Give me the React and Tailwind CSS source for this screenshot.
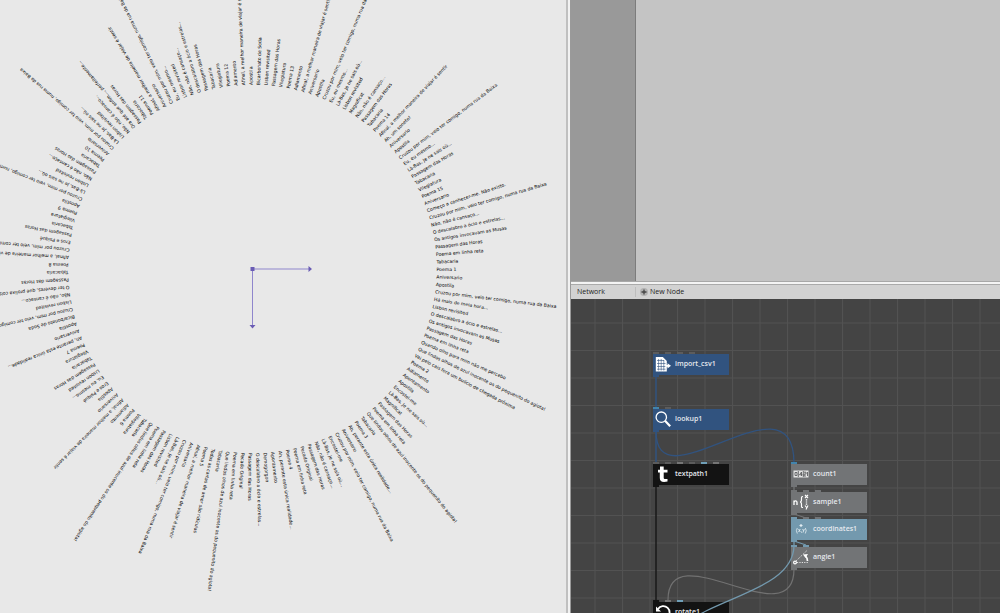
const SODA = "Bicarbonato de Soda";
const CRUZOU = "Cruzou por mim, veio ter comigo, numa rua da Baixa";
const LISBON = "Lisbon revisited";
const DESCALABRO = "O descalabro a ócio e estrelas...";
const MUSAS = "Os antigos invocavam as Musas";
const HORAS = "Passagem das Horas";
const RETA = "Poema em linha reta";
const OLHOS = "Que lindos olhos de azul inocente os do pequenito do agiota!";
const LABAS = "Là-Bas, Je ne sais où...";
const REALIDADE = "Ah, perante esta única realidade...";
const CANSACO = "Não, não é cansaço...";
const AFINAL = "Afinal, a melhor maneira de viajar é sentir";
const MESMO = "Eu, eu mesmo...";
const EROS = "Eros e Psiqué";

// clockwise, starting on the right
const poems = [
  "Poema 1", "Aniversario", "Apostila", CRUZOU, "Há mais de meia hora...", LISBON, DESCALABRO, MUSAS, HORAS, RETA,
  "Quando olho para mim não me percebo", OLHOS, "Vai pelo cais fora um bulício de chegada próxima",
  "Poema 2", "Adiamento", "Apontamento", "Apostila", "Encostei-me", LABAS, "Magnificat", HORAS, RETA, OLHOS, "Tabacaria",
  "Poema 3", REALIDADE, "Aniversario", CRUZOU, "Encostei-me", LABAS, CANSACO, HORAS, "Pecado Original", RETA,
  "Poema 4", REALIDADE, "Apontamento", "Demogorgon", DESCALABRO, HORAS, "Pecado Original", RETA, OLHOS, "Tabacaria",
  "Todas as cartas de amor são ridículas",
  "Poema 5", AFINAL, "Aniversario", CRUZOU, LABAS, LISBON, HORAS, RETA, OLHOS, "Tabacaria", "Vilegiatura",
  "Poema 6", "Adiamento", AFINAL, "Aniversario", "Apostila", EROS, MESMO, LISBON, HORAS, "Tabacaria", "Vilegiatura",
  "Poema 7", REALIDADE, "Aniversario", "Apostila", SODA, CRUZOU, LISBON, CANSACO, "O ter deveres, que prolixa coisa!", HORAS, "Tabacaria",
  "Poema 8", AFINAL, CRUZOU, EROS, HORAS, "Tabacaria", "Vilegiatura",
  "Poema 9", "Apostila", CRUZOU, LABAS, LISBON, CANSACO, HORAS, "Tabacaria",
  "Poema 10", "Aniversario", CRUZOU, LABAS, LISBON, CANSACO, "Ora até que enfim..., perfeitamente...", HORAS, "Tabacaria",
  "Poema 11", AFINAL, "Aniversario", CRUZOU, MESMO, LISBON, CANSACO, DESCALABRO, HORAS, "Tabacaria", "Vilegiatura",
  "Poema 12", "Adiamento", AFINAL, "Apostila", SODA, LISBON, HORAS, "Vilegiatura",
  "Poema 13", "Adiamento", AFINAL, "Aniversario", "Apostila", CRUZOU, MESMO, LABAS, LISBON, "Magnificat", CANSACO, HORAS, "Tabacaria",
  "Poema 14", AFINAL, "Ah, um soneto!", "Aniversario", "Apostila", CRUZOU, MESMO, LABAS, HORAS, "Tabacaria", "Vilegiatura",
  "Poema 15", "Aniversario", "Começo a conhecer-me. Não existo.", CRUZOU, CANSACO, DESCALABRO, MUSAS, HORAS, RETA, "Tabacaria",
];

const GRID = 27.5;

const nodes = [
  { name: "import_csv1", x: 82, y: 55, color: "bg-[#31537f]", ports: ["bg-[#5c5c5c]", "bg-[#5c5c5c]", "bg-[#5c5c5c]", "bg-[#5c5c5c]"], out: "bg-[#31537f]", icon: CsvIcon },
  { name: "lookup1", x: 82, y: 110, color: "bg-[#31537f]", ports: ["bg-[#4284ac]", "bg-[#5c5c5c]"], out: "bg-[#31537f]", icon: LookupIcon },
  { name: "textpath1", x: 82, y: 165, color: "bg-[#131313]", ports: ["bg-[#5c5c5c]", "bg-[#5c5c5c]", "bg-[#757575]", "bg-[#5c5c5c]", "bg-[#6f9fb8]", "bg-[#757575]"], out: "bg-[#131313]", icon: TextIcon },
  { name: "rotate1", x: 82, y: 303, color: "bg-[#131313]", ports: ["bg-[#131313]", "bg-[#757575]", "bg-[#6f9fb8]"], out: "bg-[#131313]", icon: RotateIcon },
  { name: "count1", x: 220, y: 165, color: "bg-[#727476]", ports: ["bg-[#4284ac]"], out: "bg-[#727476]", icon: CountIcon },
  { name: "sample1", x: 220, y: 193, color: "bg-[#727476]", ports: ["bg-[#727476]", "bg-[#727476]", "bg-[#727476]"], out: "bg-[#727476]", icon: SampleIcon },
  { name: "coordinates1", x: 220, y: 220, color: "bg-[#7399ae]", ports: ["bg-[#7399ae]", "bg-[#727476]", "bg-[#727476]"], out: "bg-[#7399ae]", icon: CoordinatesIcon },
  { name: "angle1", x: 220, y: 248, color: "bg-[#727476]", ports: ["bg-[#7399ae]", "bg-[#7399ae]"], out: "bg-[#727476]", icon: AngleIcon },
];

function CsvIcon() {
  return (
    <svg viewBox="0 0 16 16" className="size-4" aria-hidden="true">
      <path d="M.8 1h7l4 4v10.500H.8z" fill="#fff" />
      <path d="M2 4.500h7M2 7.500h8.500M2 10.500h8.500M2 13.200h8.500M3.600 3v11.500M6.200 3v11.500M8.800 4v10.500" stroke="#31537f" strokeWidth="0.600" />
      <path d="M10.500 9h2V7.200L16 9.800l-3.500 2.600v-1.700h-2z" fill="#fff" />
    </svg>
  );
}

function LookupIcon() {
  return (
    <svg viewBox="0 0 16 16" className="size-4" fill="none" stroke="#fff" aria-hidden="true">
      <circle cx="6.300" cy="6.200" r="5.200" strokeWidth="1.300" />
      <path d="M10 9.800l5.200 5.400" strokeWidth="2.200" />
    </svg>
  );
}

function TextIcon() {
  return (
    <svg viewBox="0 0 16 16" className="size-4" aria-hidden="true">
      <path d="M5 .5h3.700v3.300h3.800v2.700H8.700v5c0 1.500.8 1.900 3.800 1.400v2.600c-5 1-7.700.2-7.700-3.500V6.500H3V3.800h2z" fill="#fff" />
    </svg>
  );
}

function RotateIcon() {
  return (
    <svg viewBox="0 0 16 16" className="size-4" fill="none" stroke="#fff" strokeWidth="1.800" aria-hidden="true">
      <path d="M3 5a6.300 6.300 0 1 1-.5 6" />
      <path d="M1 2.500v5h5z" fill="#fff" stroke="none" />
    </svg>
  );
}

function CountIcon() {
  return (
    <svg viewBox="0 0 16 16" className="size-4" aria-hidden="true">
      <path d="M.5 4.500h15v7H.5z" fill="#e4e4e4" />
      <g fill="none" stroke="#5c5e60" strokeWidth="0.900">
        <path d="M2 6.500h2v3H2zM8.500 10V6L6.500 8.800h3M11 6.200h2v1.900h-2v1.900h2M14.500 6v4M5.300 5v6M10.300 5v6" />
      </g>
    </svg>
  );
}

function SampleIcon() {
  return (
    <svg viewBox="0 0 16 16" className="size-4" fill="none" stroke="#fff" aria-hidden="true">
      <path d="M1 11V6.500M1 8c1-1.600 3-1.400 3 .4V11" strokeWidth="1.300" />
      <path d="M10 2.500c-1.800 0-1.500 1-1.500 3S8 8 7 8c1 0 1.500.5 1.500 2.500s-.3 3 1.500 3" strokeWidth="1.200" />
      <path d="M12 1l3 3M15 1l-3 3M12 11.500l1.500 2M15 11.500L13 15.500" strokeWidth="1.100" />
      <path d="M13.500 5.200v5.500" strokeWidth="1.400" strokeDasharray="1.200 1" />
    </svg>
  );
}

function CoordinatesIcon() {
  return (
    <svg viewBox="0 0 16 16" className="size-4" fill="none" stroke="#e3edf2" strokeWidth="0.800" aria-hidden="true">
      <path d="M4.300 7Q2.500 9.500 4.300 12.500M12.300 7q1.800 2.500 0 5.500M5.500 8l1.800 3M7.300 8l-1.800 3M8.600 10.500v1.300M9.600 8l1 2M11.400 8l-1.400 3.600" />
      <path d="M8 3v3M6.500 4.500h3" strokeWidth="1.200" />
    </svg>
  );
}

function AngleIcon() {
  return (
    <svg viewBox="0 0 16 16" className="size-4" fill="none" stroke="#fff" aria-hidden="true">
      <path d="M3 12L14 1.500M4 13.500h12" strokeWidth="0.800" strokeDasharray="1.200 1.200" />
      <circle cx="2" cy="13.500" r="1.400" strokeWidth="1.200" />
      <path d="M14.500 12c0-2-.5-3.500-2-5" strokeWidth="1.700" />
      <path d="M10 5.500l5-.5-2.500 4z" fill="#fff" stroke="none" />
    </svg>
  );
}

// drawn in tenths of a pixel
function PoemWheel() {
  return (
    <svg viewBox="0 0 5660 6130" preserveAspectRatio="xMinYMin slice" className="h-full w-full">
      <g transform="translate(2525 2690)">
        <g fontFamily="'DejaVu Sans', sans-serif" fontSize="46" fill="#000">
          {poems.map((title, i) => (
            <text key={i} x="1840" y="20" transform={`rotate(${(i * 360) / poems.length})`}>{title}</text>
          ))}
        </g>
        <path d="M0 0h570M0 0v570" stroke="#8f86cc" strokeWidth="10" fill="none" />
        <path d="M-20-20h40v40h-40zM560-30l35 30-35 30zM-30 560l30 35 30-35z" fill="#6a5cb4" />
      </g>
    </svg>
  );
}

function Node({ node }) {
  const Icon = node.icon;
  return (
    <div className="absolute" style={{ left: node.x, top: node.y }}>
      <div className="absolute -top-0.5 left-0 flex gap-1.5">
        {node.ports.map((port, i) => (
          <span key={i} className={`h-0.5 w-1.5 ${port}`} />
        ))}
      </div>
      <button type="button" className={`flex h-[21px] w-[76px] items-center gap-1 pl-0.5 text-left text-[7px] font-semibold text-[#e6e9ee] ${node.color}`}>
        <Icon />
        {node.name}
      </button>
      <span className={`absolute top-full left-0 h-0.5 w-1.5 ${node.out}`} />
    </div>
  );
}

function Wires() {
  return (
    <svg className="absolute inset-0 h-full w-full" fill="none" aria-hidden="true">
      <defs>
        <pattern id="grid" x="23.500" y="23.500" width={GRID} height={GRID} patternUnits="userSpaceOnUse">
          <path d={`M.5 0v${GRID}M0 .5h${GRID}`} stroke="#525252" />
        </pattern>
      </defs>
      <rect width="100%" height="100%" fill="url(#grid)" />
      <path d="M85 77v32M85 132v31" stroke="#31537f" strokeWidth="1.500" />
      <path d="M85 132C85 210 223 70 223 164" stroke="#31537f" strokeWidth="1.300" />
      <path d="M85 187v115" stroke="#181818" strokeWidth="1.500" />
      <path d="M223 187v5M223 215l12 4" stroke="#727476" strokeWidth="1.300" />
    </svg>
  );
}

function FrontWires() {
  return (
    <svg className="pointer-events-none absolute inset-0 h-full w-full" fill="none" aria-hidden="true">
      <path d="M223 270C223 340 97 232 97 301" stroke="#727272" strokeWidth="1.200" />
      <path d="M223 242v5M223 242l12 4M223 247C222 290 145 298 115 325" stroke="#7399ae" strokeWidth="1.300" />
    </svg>
  );
}

export default function App() {
  return (
    <div className="flex h-screen overflow-hidden bg-[#e8e8e8] font-['Open_Sans','Noto_Sans',sans-serif]">
      <main className="min-w-0 flex-[566]">
        <PoemWheel />
      </main>
      <div className="w-[5px] shrink-0 border-r border-l-2 border-r-[#9a9a9a] border-l-[#c0c0c0] bg-[#f2f2f2]" />
      <div className="flex min-w-0 flex-[429] flex-col">
        <section className="flex h-[46%] shrink-0 border-b border-[#a8a8a8] bg-[#c4c4c4]">
          <div className="w-[65px] border-r border-[#7c7c7c] bg-[#999999]" />
        </section>
        <div className="h-[3px] shrink-0 border-b border-[#aaaaaa] bg-[#f4f4f4]" />
        <header className="flex h-3.5 shrink-0 items-center bg-[#d2d2d2] text-[7px] font-medium text-[#222222]">
          <h2 className="w-[65px] border-r border-[#bdbdbd] pl-1.5">Network</h2>
          <button type="button" className="flex items-center gap-0.5 pl-1">
            <svg viewBox="0 0 8 8" className="size-2" aria-hidden="true">
              <circle cx="4" cy="4" r="4" fill="#b2b2b2" />
              <path d="M4 1.500v5M1.500 4h5" stroke="#444" strokeWidth="1.300" />
            </svg>
            New Node
          </button>
        </header>
        <section className="relative flex-1 overflow-hidden bg-[#444444]">
          <Wires />
          {nodes.map((node) => (
            <Node key={node.name} node={node} />
          ))}
          <FrontWires />
        </section>
      </div>
    </div>
  );
}
